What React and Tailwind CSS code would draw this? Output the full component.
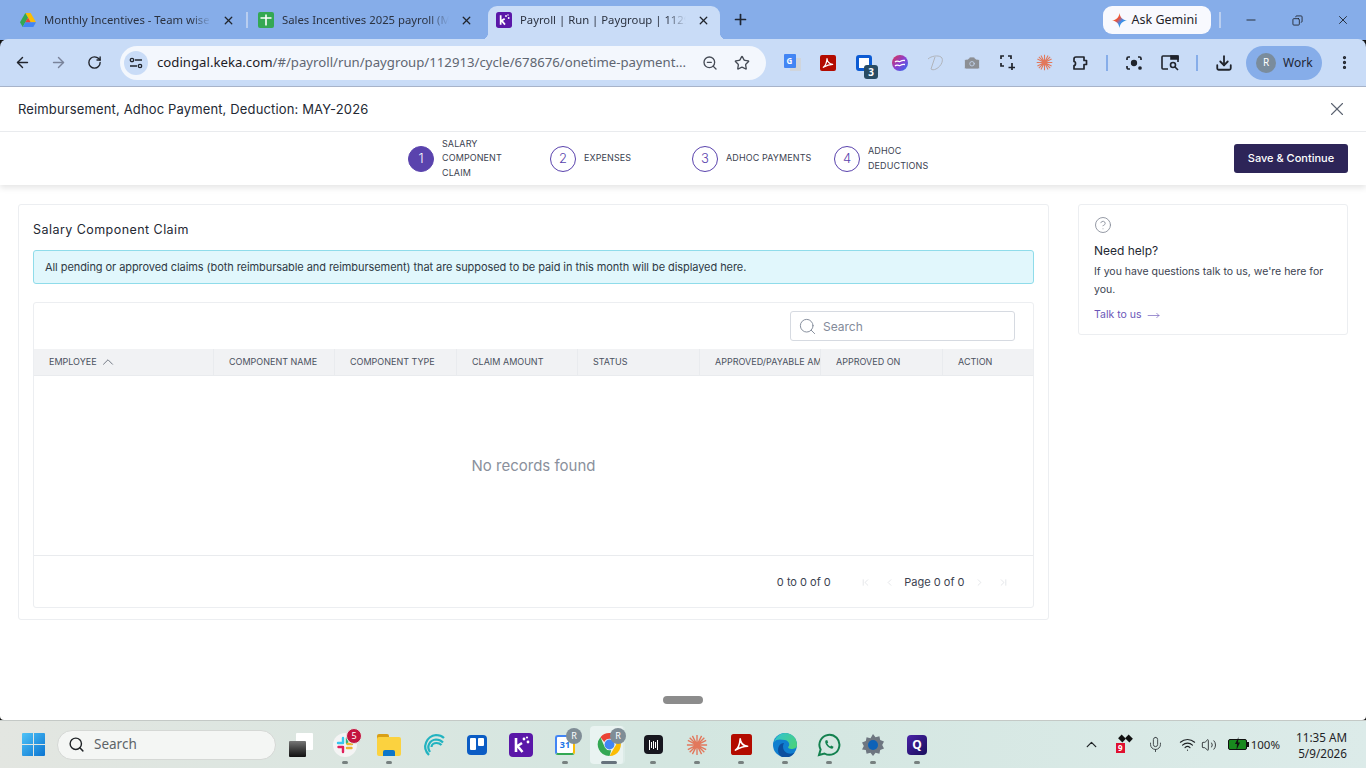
import { ArrowLeft, ArrowRight, RotateCw, X, Plus, Minus, ZoomOut, Star, Search, ChevronUp, ChevronLeft, ChevronRight, Mic, Wifi, Volume2, MoreVertical, Download, Copy, Camera, ChevronFirst, ChevronLast, CircleHelp, MoveRight } from "lucide-react";

const chromeFont = "font-['Noto_Sans',sans-serif]";
const appFont = "font-['Inter',sans-serif]";

const KekaLogo = ({ size = 16 }) => (
  <svg width={size} height={size} viewBox="0 0 24 24">
    <rect width="24" height="24" rx="4" fill="#5a17a8" />
    <path d="M7 5v14M7 14l6-4M8.500 13l5 6" stroke="#fff" strokeWidth="2.600" fill="none" />
    <circle cx="15" cy="6" r="1.400" fill="#fff" />
    <circle cx="19" cy="9" r="1.400" fill="#fff" />
    <circle cx="18" cy="4.500" r="1.100" fill="#fff" />
  </svg>
);

const DriveLogo = () => (
  <svg width="16" height="14" viewBox="0 0 24 21">
    <path d="M8 0h8l8 14h-8z" fill="#fbbc04" />
    <path d="M8 0L0 14l4 7 8-14z" fill="#34a853" />
    <path d="M4 21h16l4-7H8z" fill="#4285f4" />
    <path d="M8 14h8l-4-7z" fill="#ea4335" />
  </svg>
);

const SheetsLogo = () => (
  <svg width="16" height="16" viewBox="0 0 16 16">
    <rect width="16" height="16" rx="2" fill="#34a853" />
    <path d="M2.500 6h11M8 2.500v11" stroke="#fff" strokeWidth="1.600" />
  </svg>
);

const PdfIcon = ({ size = 16 }) => (
  <svg width={size} height={size} viewBox="0 0 24 24">
    <rect width="24" height="24" rx="3" fill="#b30b00" />
    <path d="M5 18.500c3-2 5-7 5.500-13 .5 5 3.500 8 8.500 8.500-4 0-9 1.500-14 4.500z" fill="none" stroke="#fff" strokeWidth="1.800" strokeLinejoin="round" />
  </svg>
);

const Burst = ({ size = 18 }) => (
  <svg width={size} height={size} viewBox="0 0 24 24" stroke="#e2785c" strokeWidth="1.500">
    <path d="M12 1v22M1 12h22M4 4l16 16M20 4L4 20M7 2l10 20M17 2L7 22M2 7l20 10M22 7L2 17" />
  </svg>
);

const ChromeLogo = () => (
  <svg width="25" height="25" viewBox="0 0 24 24">
    <path d="M12 1a11 11 0 0 1 9.500 5.500H12a5.500 5.500 0 0 0-5 3L3.300 5A11 11 0 0 1 12 1z" fill="#ea4335" />
    <path d="M21.500 6.500A11 11 0 0 1 12 23l4.700-8.200a5.500 5.500 0 0 0 .1-8.300z" fill="#fbbc04" />
    <path d="M12 23A11 11 0 0 1 3.300 5L7.600 14.800a5.500 5.500 0 0 0 6 2.600z" fill="#34a853" />
    <circle cx="12" cy="12" r="4.700" fill="#4285f4" />
  </svg>
);

const SlackLogo = () => (
  <svg width="24" height="24" viewBox="0 0 24 24">
    <circle cx="12" cy="12" r="12" fill="#f4f4f4" />
    <path d="M10 5v5M5 10h5" stroke="#36c5f0" strokeWidth="2.400" strokeLinecap="round" />
    <path d="M14 5v5" stroke="#2eb67d" strokeWidth="2.400" strokeLinecap="round" />
    <path d="M14.500 11h4.500M14 15h4.500" stroke="#ecb22e" strokeWidth="2.400" strokeLinecap="round" />
    <path d="M10 14v5M5.500 14H10" stroke="#e01e5a" strokeWidth="2.400" strokeLinecap="round" />
  </svg>
);

const EdgeLogo = () => (
  <svg width="24" height="24" viewBox="0 0 24 24">
    <defs>
      <linearGradient id="edgeTop" x1="0" y1="0" x2="1" y2="0.600">
        <stop offset="0" stopColor="#2fc2d6" />
        <stop offset="1" stopColor="#49d17f" />
      </linearGradient>
    </defs>
    <circle cx="12" cy="12" r="12" fill="#0f7fd0" />
    <path d="M1 9C3 3 8 0 12 0c7 0 12 5 12 12 0 3-3 4-5.500 4-2 0-3.500-1-3.500-2 2-1 2-6-3-7C7 6 3 6 1 9z" fill="url(#edgeTop)" />
    <path d="M9 24c-4-2-5-7-3-11 1-2 3-3 5-3-2 3-1 8 3 10 3 1 6 1 8-1-2 4-8 7-13 5z" fill="#0b4f9e" />
  </svg>
);

const Tab = ({ icon, title, w, active }) => (
  <div className={`relative flex items-center h-[34px] pb-[6px] shrink-0 ${w} ${active ? "bg-[#c9dcf7] rounded-t-[9px]" : ""}`}>
    <div className={`flex items-center justify-center w-4 h-4 shrink-0 ${active ? "ml-2" : "ml-5"}`}>{icon}</div>
    <span className={`ml-2 text-[11.300px] text-[#2b3240] whitespace-nowrap overflow-hidden flex-1 [mask-image:linear-gradient(to_right,black_88%,transparent)] ${chromeFont}`}>{title}</span>
    <X size={13} strokeWidth={2.400} className={`text-[#20242c] shrink-0 ${active ? "mx-[10.500px]" : "ml-[11px] mr-[3.500px]"}`} />
    {active && <div className="absolute left-[-8px] bottom-0 w-2 h-2 bg-[radial-gradient(circle_at_0_0,transparent_8px,#c9dcf7_8.500px)]" />}
    {active && <div className="absolute right-[-8px] bottom-0 w-2 h-2 bg-[radial-gradient(circle_at_100%_0,transparent_8px,#c9dcf7_8.500px)]" />}
  </div>
);

const TabBar = () => (
  <div className="flex items-end h-10 bg-[#86ade9] shrink-0">
    <Tab icon={<DriveLogo />} title="Monthly Incentives - Team wise" w="w-[238px]" />
    <div className="w-0.5 h-4 bg-[#b9cef0] mb-3 ml-2 -mr-[10px] shrink-0" />
    <Tab icon={<SheetsLogo />} title="Sales Incentives 2025 payroll (MAY)" w="w-[238px]" />
    <div className="ml-3">
      <Tab active icon={<KekaLogo />} title="Payroll | Run | Paygroup | 112913" w="w-[232px]" />
    </div>
    <Plus size={17} strokeWidth={2.400} className="text-[#1f2633] ml-3 mb-3 shrink-0" />
    <div className={`flex items-center justify-center gap-[5px] ml-auto w-[108px] h-7 mb-[6px] pr-[5px] rounded-[9px] bg-[#f8f9fe] text-[12.500px] text-[#1f2228] ${chromeFont}`}>
      <svg width="15" height="15" viewBox="0 0 24 24">
        <defs>
          <linearGradient id="gem" x1="0" y1="0" x2="1" y2="1">
            <stop offset="0" stopColor="#f6b21b" />
            <stop offset="0.400" stopColor="#e8503f" />
            <stop offset="0.600" stopColor="#3d8cf0" />
            <stop offset="1" stopColor="#2fb86a" />
          </linearGradient>
        </defs>
        <path d="M12 0c1 7 5 11 12 12-7 1-11 5-12 12-1-7-5-11-12-12 7-1 11-5 12-12z" fill="url(#gem)" />
      </svg>
      Ask Gemini
    </div>
    <div className="w-0.5 h-4 bg-[#b9cef0] mb-3 ml-2 shrink-0" />
    <div className="flex items-center mb-[13px] text-[#1c2026]">
      <Minus size={14} strokeWidth={1.500} className="ml-[23px]" />
      <Copy size={11} strokeWidth={1.800} className="ml-[34px] -scale-x-100" />
      <X size={14} strokeWidth={1.500} className="ml-[33px] mr-4" />
    </div>
  </div>
);

const IconSlot = ({ children, className = "" }) => (
  <div className={`flex items-center justify-center w-9 h-9 shrink-0 relative ${className}`}>{children}</div>
);

const Toolbar = () => (
  <div className="flex items-center h-12 bg-[#c9dcf7] border-b border-[#a9b6cc] shrink-0 rounded-t-[8px] -mt-px">
    <IconSlot className="ml-1"><ArrowLeft size={17} strokeWidth={2} className="text-[#20242c]" /></IconSlot>
    <IconSlot><ArrowRight size={17} strokeWidth={2} className="text-[#79839a]" /></IconSlot>
    <IconSlot><RotateCw size={15} strokeWidth={2.200} className="text-[#20242c]" /></IconSlot>
    <div className="flex items-center w-[646px] h-[34px] ml-2 rounded-full bg-[#f3f7fd] shrink-0">
      <div className="flex items-center justify-center w-6 h-6 ml-1 rounded-full bg-[#c9dcf7] shrink-0">
        <svg width="14" height="12" viewBox="0 0 14 12" fill="none" stroke="#20242c" strokeWidth="1.300">
          <circle cx="3" cy="3" r="1.700" />
          <path d="M6 3h7M1 9h7" />
          <circle cx="11" cy="9" r="1.700" />
        </svg>
      </div>
      <div className={`ml-[9px] text-[13.200px] whitespace-nowrap ${chromeFont}`}>
        <span className="text-[#1c2026]">codingal.keka.com</span>
        <span className="text-[#5f6672]">/#/payroll/run/paygroup/112913/cycle/678676/onetime-payment...</span>
      </div>
      <ZoomOut size={16} strokeWidth={2} className="text-[#454b55] ml-auto shrink-0" />
      <Star size={16} strokeWidth={2} className="text-[#454b55] ml-4 mr-4 shrink-0" />
    </div>
    <IconSlot className="ml-2">
      <div className="relative w-[17px] h-[17px]">
        <div className="absolute right-0 bottom-0 w-[11px] h-[13px] bg-[#d0d5dc]" />
        <div className="absolute left-0 top-0 w-3 h-[14px] bg-[#4285f4] rounded-[1px] text-[8px] leading-[14px] text-white text-center font-bold">G</div>
      </div>
    </IconSlot>
    <IconSlot><PdfIcon /></IconSlot>
    <IconSlot>
      <div className="w-4 h-4 rounded-[3px] border-[3px] border-[#0c5bd3] bg-white" />
      <div className={`absolute right-[4px] bottom-[2px] w-[14px] h-[14px] rounded-[3px] bg-[#284b63] text-white text-[10px] leading-[14px] text-center font-bold ${chromeFont}`}>3</div>
    </IconSlot>
    <IconSlot>
      <svg width="16" height="16" viewBox="0 0 16 16">
        <defs>
          <linearGradient id="wave" x1="0" y1="0" x2="1" y2="1">
            <stop offset="0" stopColor="#e0324b" />
            <stop offset="0.500" stopColor="#8b3fd0" />
            <stop offset="1" stopColor="#2d6df0" />
          </linearGradient>
        </defs>
        <circle cx="8" cy="8" r="8" fill="url(#wave)" />
        <path d="M3 7c2-2 4 0 5-.5s2-1.500 5-1M3 11c2-2 4 0 5-.5s2-1.500 5-1" fill="none" stroke="#fff" strokeWidth="1.300" />
      </svg>
    </IconSlot>
    <IconSlot>
      <svg width="18" height="16" viewBox="0 0 18 16" fill="none" stroke="#b0b4bb" strokeWidth="1">
        <path d="M1 4c3-3 10-4 13-2s1 9-5 12c-2 1-4 1-5 0M8 2L4 14" />
      </svg>
    </IconSlot>
    <IconSlot><Camera size={18} fill="#8c8f94" strokeWidth={1} className="text-[#c9dcf7]" /></IconSlot>
    <IconSlot>
      <svg width="16" height="16" viewBox="0 0 16 16" fill="none" stroke="#20242c" strokeWidth="1.700">
        <path d="M1 4V1h3M8 1h3v3M1 8v3h3M12 8v7M8.500 12.500H15" />
      </svg>
    </IconSlot>
    <IconSlot><Burst size={17} /></IconSlot>
    <IconSlot>
      <svg width="16" height="16" viewBox="0 0 16 16" fill="none" stroke="#20242c" strokeWidth="1.700" strokeLinejoin="round">
        <path d="M4 2h8v3.500h2.500v4H12V14H2v-3.500c2 0 2-4 0-4V4a2 2 0 0 1 2-2z" />
      </svg>
    </IconSlot>
    <div className="w-0.5 h-4 bg-[#86ade9] mx-[8px] shrink-0" />
    <IconSlot>
      <svg width="16" height="16" viewBox="0 0 16 16" fill="none" stroke="#20242c" strokeWidth="1.700">
        <path d="M1 5V3.500A1.500 1.500 0 0 1 2.500 2H4M12 2h1.500A1.500 1.500 0 0 1 15 3.500V5M1 11v1.500A1.500 1.500 0 0 0 2.500 14H4" />
        <circle cx="8" cy="8" r="2.300" fill="#20242c" />
        <circle cx="14" cy="13" r="1" fill="#20242c" />
      </svg>
    </IconSlot>
    <IconSlot>
      <svg width="18" height="16" viewBox="0 0 18 16" fill="none" stroke="#20242c" strokeWidth="1.600">
        <path d="M7 14H2a1 1 0 0 1-1-1V2a1 1 0 0 1 1-1h14a1 1 0 0 1 1 1v5" />
        <path d="M10 1h7v3h-7z" fill="#20242c" />
        <circle cx="12" cy="10" r="2.500" />
        <path d="M14 12l3 3" />
      </svg>
    </IconSlot>
    <div className="w-0.5 h-4 bg-[#86ade9] mx-[8px] shrink-0" />
    <IconSlot><Download size={18} strokeWidth={2.400} className="text-[#20242c]" /></IconSlot>
    <div className={`flex items-center w-[76px] h-[34px] ml-1 rounded-full bg-[#86ade9] shrink-0 text-[12px] text-[#1f2633] ${chromeFont}`}>
      <div className="flex items-center justify-center w-5 h-5 ml-[10px] rounded-full bg-[#7a8c9c] text-[10px] text-white">R</div>
      <span className="ml-[7px]">Work</span>
    </div>
    <IconSlot className="ml-1"><MoreVertical size={17} strokeWidth={2.600} className="text-[#20242c]" /></IconSlot>
  </div>
);

const Step = ({ n, active, label }) => (
  <div className="flex items-center shrink-0 w-[142px]">
    <div className={`flex items-center justify-center w-[26px] h-[26px] rounded-full shrink-0 border text-[13px] font-light border-[#5a43ad] ${active ? "bg-[#5a43ad] text-white" : "bg-white text-[#5a43ad]"}`}>{n}</div>
    <div className="ml-2 w-[76px] shrink-0 text-[9px] leading-[14.500px] text-[#3b4250] tracking-[0.1px]">{label}</div>
  </div>
);

const AppHeader = () => (
  <div className="relative shrink-0 bg-white shadow-[0_3px_6px_rgba(0,0,0,0.1)]">
    <div className="flex items-center h-[45px] border-b border-[#e9ebee] pl-[18px] pr-[18px]">
      <span className="mt-[2px] text-[13px] tracking-[0.14px] text-[#232833]">Reimbursement, Adhoc Payment, Deduction: MAY-2026</span>
      <X size={22} strokeWidth={1.200} className="ml-auto text-[#5b6270]" />
    </div>
    <div className="flex items-center h-[53px] pl-[408px] pr-[18px]">
      <Step n={1} active label="SALARY COMPONENT CLAIM" />
      <Step n={2} label="EXPENSES" />
      <Step n={3} label={<span className="whitespace-nowrap">ADHOC PAYMENTS</span>} />
      <Step n={4} label="ADHOC DEDUCTIONS" />
      <button className="ml-auto w-[114px] h-[29px] rounded-[3px] bg-[#2d2558] text-white text-[11px] font-medium">Save &amp; Continue</button>
    </div>
  </div>
);

const columns = [
  { label: "COMPONENT NAME", w: "w-[121px]" },
  { label: "COMPONENT TYPE", w: "w-[122px]" },
  { label: "CLAIM AMOUNT", w: "w-[121px]" },
  { label: "STATUS", w: "w-[122px]" },
  { label: "APPROVED/PAYABLE AMOUNT", w: "w-[121px]" },
  { label: "APPROVED ON", w: "w-[122px]" },
  { label: "ACTION", w: "w-[90px]" },
];

const ClaimTable = () => (
  <div className="mt-[18px] h-[306px] flex flex-col rounded-[3px] border border-[#eceef1]">
    <div className="flex justify-end h-[46px] pt-2 pr-[18px]">
      <div className="flex items-center w-[225px] h-[30px] rounded-[3px] border border-[#d6dae1] text-[12px] text-[#838b9a]">
        <Search size={19} strokeWidth={1.200} className="ml-[7px] text-[#838b9a]" />
        <span className="ml-[6px] mt-[2px]">Search</span>
      </div>
    </div>
    <div className="flex h-[27px] bg-[#f1f2f4] border-b border-[#e9ebee] text-[9px] text-[#4a5160] shrink-0">
      <div className="flex items-center w-[180px] pl-[15px] border-r border-[#e9ebee] shrink-0">
        EMPLOYEE
        <ChevronUp size={18} strokeWidth={1} className="ml-[2px] text-[#4a5160]" />
      </div>
      {columns.map((c) => (
        <div key={c.label} className={`flex items-center pl-[15px] overflow-hidden whitespace-nowrap shrink-0 border-r border-[#e9ebee] last:border-r-0 ${c.w}`}>
          {c.label}
        </div>
      ))}
    </div>
    <div className="flex items-center justify-center h-[180px] pt-[1px] border-b border-[#e9ebee] text-[15px] text-[#8a909c]">No records found</div>
    <div className="flex items-center justify-end flex-1 pt-[2px] pr-6 text-[11px] text-[#3b4250]">
      <span className="mr-[29px]">0 to 0 of 0</span>
      <ChevronFirst size={11} strokeWidth={1.300} className="text-[#d3d6db]" />
      <ChevronLeft size={11} strokeWidth={1.300} className="ml-[13px] text-[#d3d6db]" />
      <span className="mx-[9.500px]">Page 0 of 0</span>
      <ChevronRight size={11} strokeWidth={1.300} className="text-[#d3d6db]" />
      <ChevronLast size={11} strokeWidth={1.300} className="ml-[13px] text-[#d3d6db]" />
    </div>
  </div>
);

const MainCard = () => (
  <div className="w-[1031px] h-[416px] shrink-0 rounded-[3px] border border-[#eceef1] px-[14px] pt-[17px]">
    <div className="text-[12.500px] leading-4 tracking-[0.45px] text-[#232833]">Salary Component Claim</div>
    <div className="flex items-center h-[34px] mt-3 pl-[11px] rounded-[3px] border border-[#8fdcea] bg-[#e1f7fc] text-[11px] tracking-[-0.07px] text-[#2f3a45]">
      All pending or approved claims (both reimbursable and reimbursement) that are supposed to be paid in this month will be displayed here.
    </div>
    <ClaimTable />
  </div>
);

const HelpCard = () => (
  <div className="w-[270px] h-[131px] ml-[29px] shrink-0 rounded-[3px] border border-[#eceef1] pl-[15px] pr-3 pt-[11px]">
    <CircleHelp size={18} strokeWidth={1.200} className="text-[#8a909c]" />
    <div className="mt-[9px] text-[12px] leading-4 text-[#232833]">Need help?</div>
    <div className="mt-1 text-[10.500px] leading-[18px] text-[#3b4250]">If you have questions talk to us, we're here for you.</div>
    <div className="flex items-center mt-2 text-[10.500px] leading-4 text-[#6a56b8]">
      Talk to us
      <MoveRight size={13} strokeWidth={1.200} className="ml-[5px]" />
    </div>
  </div>
);

const Slot = ({ children, dot = true }) => (
  <div className="relative flex items-center justify-center w-11 h-12 shrink-0">
    {children}
    {dot && <div className="absolute bottom-[5px] w-[6px] h-[3px] rounded-full bg-[#77807f]" />}
  </div>
);

const UserBadge = () => (
  <div className="absolute right-[5px] top-[7px] flex items-center justify-center w-4 h-4 rounded-full bg-[#7f8d96] text-[9px] text-white">R</div>
);

const Taskbar = () => (
  <div className={`flex items-center h-12 shrink-0 border-t border-[#c4c9c6] bg-gradient-to-r from-[#e3e6e1] via-[#d3e6e0] to-[#dcebe9] ${chromeFont}`}>
    <div className="flex items-center justify-center w-6 ml-[21px] shrink-0">
      <svg width="23" height="23" viewBox="0 0 23 23">
        <defs>
          <linearGradient id="win" x1="0" y1="0" x2="1" y2="1">
            <stop offset="0" stopColor="#4fc3f7" />
            <stop offset="1" stopColor="#0a74d1" />
          </linearGradient>
        </defs>
        <path d="M0 1a1 1 0 0 1 1-1h10v11H0zM12 0h10a1 1 0 0 1 1 1v10H12zM0 12h11v11H1a1 1 0 0 1-1-1zM12 12h11v10a1 1 0 0 1-1 1H12z" fill="url(#win)" />
      </svg>
    </div>
    <div className="flex items-center w-[219px] h-[30px] ml-3 rounded-full border border-[#d5d8d5] bg-[#f4f6f4] shrink-0 text-[13.500px] text-[#5d6468]">
      <Search size={17} strokeWidth={2} className="ml-[10px] text-[#1f2326]" />
      <span className="ml-[9px]">Search</span>
    </div>
    <div className="flex ml-[3px]">
      <Slot dot={false}>
        <div className="relative w-6 h-6">
          <div className="absolute right-0 top-0 w-[17px] h-[17px] bg-white rounded-[1px]" />
          <div className="absolute left-0 bottom-0 w-[17px] h-4 bg-gradient-to-b from-[#777] to-[#111] rounded-[1px]" />
        </div>
      </Slot>
      <Slot>
        <SlackLogo />
        <div className="absolute right-[5px] top-[7px] flex items-center justify-center w-4 h-4 rounded-full bg-[#c3133f] border border-[#e3e6e1] text-[9px] text-white">5</div>
      </Slot>
      <Slot>
        <div className="relative w-6 h-[22px]">
          <div className="absolute left-0 top-0 w-3 h-[6px] bg-[#d99f16] rounded-t-[2px]" />
          <div className="absolute left-0 top-[3px] w-6 h-[19px] bg-[#fbd23f] rounded-[2px]" />
          <div className="absolute left-[6px] bottom-0 w-3 h-[6px] bg-[#0d77c9] rounded-t-[2px]" />
        </div>
      </Slot>
      <Slot dot={false}>
        <svg width="24" height="24" viewBox="0 0 24 24" fill="none" stroke="#22b3c0" strokeWidth="2.200">
          <path d="M8 22C0 14 6 3 15 2c3 0 6 1 8 3" />
          <path d="M9 19C5 13 9 7 15 6.500c3 0 5 1 7 3" />
          <path d="M10.500 14c0-3 3-4 5-4 2.500 0 4 1 5 2" />
        </svg>
      </Slot>
      <Slot dot={false}>
        <div className="flex gap-[2px] w-5 h-5 p-[3px] rounded-[4px] bg-[#0b5cc4]">
          <div className="w-[6px] h-3 bg-white rounded-[1px]" />
          <div className="w-[6px] h-2 bg-white rounded-[1px]" />
        </div>
      </Slot>
      <Slot dot={false}><KekaLogo size={24} /></Slot>
      <Slot>
        <div className="w-5 h-5 bg-white border-2 border-[#4285f4] border-r-[#fbbc04] border-b-[#34a853] rounded-[3px] text-[9px] font-bold leading-4 text-center text-[#1a73e8]">31</div>
        <UserBadge />
      </Slot>
      <div className="relative flex items-center justify-center w-11 h-12 shrink-0">
        <div className="absolute left-[3px] top-[5px] w-[35px] h-[38px] rounded-[4px] bg-[#e9f3f1] border-r-2 border-[#dcebe7]" />
        <div className="relative"><ChromeLogo /></div>
        <UserBadge />
        <div className="absolute bottom-[5px] left-[14px] w-4 h-[3px] rounded-full bg-[#66727c]" />
      </div>
      <Slot>
        <div className="flex items-center justify-center gap-px w-[19px] h-[19px] rounded-[4px] bg-[#17171f]">
          <div className="w-px h-[10px] bg-white" />
          <div className="w-px h-[6px] bg-white" />
          <div className="w-px h-2 bg-white" />
          <div className="w-px h-[6px] bg-white" />
          <div className="w-px h-[10px] bg-white" />
        </div>
      </Slot>
      <Slot><Burst size={22} /></Slot>
      <Slot><PdfIcon size={21} /></Slot>
      <Slot><EdgeLogo /></Slot>
      <Slot>
        <svg width="24" height="24" viewBox="0 0 24 24" fill="none" stroke="#13814f" strokeWidth="2">
          <path d="M2 22l1.600-5.500A10 10 0 1 1 7.500 20.500z" />
          <path d="M8.500 7.500c-1 2 1 5 2.500 6.300 1.500 1.400 4 2.500 5 1.500l.5-1.500-2.300-1.200-1 1c-1-.5-2.500-2-3-3l1-1-1-2.500z" fill="#13814f" stroke="none" />
        </svg>
      </Slot>
      <Slot>
        <svg width="24" height="24" viewBox="0 0 24 24">
          <path d="M12 1l2.500 3.200 3.900-1 .8 3.900 3.800 1.400-1.800 3.500 1.800 3.500-3.800 1.400-.8 3.900-3.900-1L12 23l-2.500-3.200-3.900 1-.8-3.900L1 16.500 2.800 13 1 9.500l3.800-1.400.8-3.900 3.900 1z" fill="#6e7680" />
          <circle cx="12" cy="12" r="5" fill="#0d62b8" />
        </svg>
      </Slot>
      <Slot>
        <div className="flex items-center justify-center w-5 h-5 rounded-[4px] bg-gradient-to-br from-[#4a22a8] to-[#1a0f5c] text-[12px] font-bold text-white">Q</div>
      </Slot>
    </div>
    <div className="flex items-center ml-auto pr-[19px] text-[#1f2326]">
      <ChevronUp size={17} strokeWidth={1.800} />
      <div className="relative w-4 h-[17px] ml-4">
        <div className="absolute right-0 top-0 grid grid-cols-2 gap-px">
          <div className="w-[6px] h-[5px] bg-[#111] rotate-45" />
          <div className="w-[6px] h-[5px] bg-[#111] rotate-45" />
        </div>
        <div className="absolute left-0 bottom-0 w-[9px] h-[10px] bg-[#e0102f] text-[8px] leading-[10px] text-center text-white font-bold">9</div>
      </div>
      <Mic size={17} strokeWidth={1.300} className="ml-[15px] text-[#3a4044]" />
      <Wifi size={17} strokeWidth={1.600} className="ml-[15px]" />
      <Volume2 size={16} strokeWidth={1.300} className="ml-[5px]" />
      <div className="relative flex items-center justify-center w-[19px] h-[11px] ml-[11px] rounded-[2px] bg-[#18891e] border border-[#111]">
        <div className="absolute -right-[3px] w-[2px] h-[5px] bg-[#111]" />
        <svg width="7" height="13" viewBox="0 0 7 13" className="absolute -top-[3px]">
          <path d="M4.500 0L1 7h2l-.500 6L6 5.500H4z" fill="#111" />
        </svg>
      </div>
      <span className="ml-[4px] text-[11.500px]">100%</span>
      <div className="ml-4 flex flex-col items-end text-[11.700px] leading-4">
        <span>11:35 AM</span>
        <span>5/9/2026</span>
      </div>
    </div>
  </div>
);

const App = () => {
  return (
    <div className="flex flex-col w-[1366px] h-[768px] overflow-hidden bg-[#111]">
      <TabBar />
      <Toolbar />
      <div className={`relative flex flex-col flex-1 min-h-0 bg-white rounded-b-[4px] ${appFont}`}>
        <AppHeader />
        <div className="flex items-start pl-[18px] pt-[19px]">
          <MainCard />
          <HelpCard />
        </div>
        <div className="absolute left-[663px] bottom-4 w-10 h-2 rounded-full bg-[#8c8c8c]" />
      </div>
      <Taskbar />
    </div>
  );
};

export default App;
